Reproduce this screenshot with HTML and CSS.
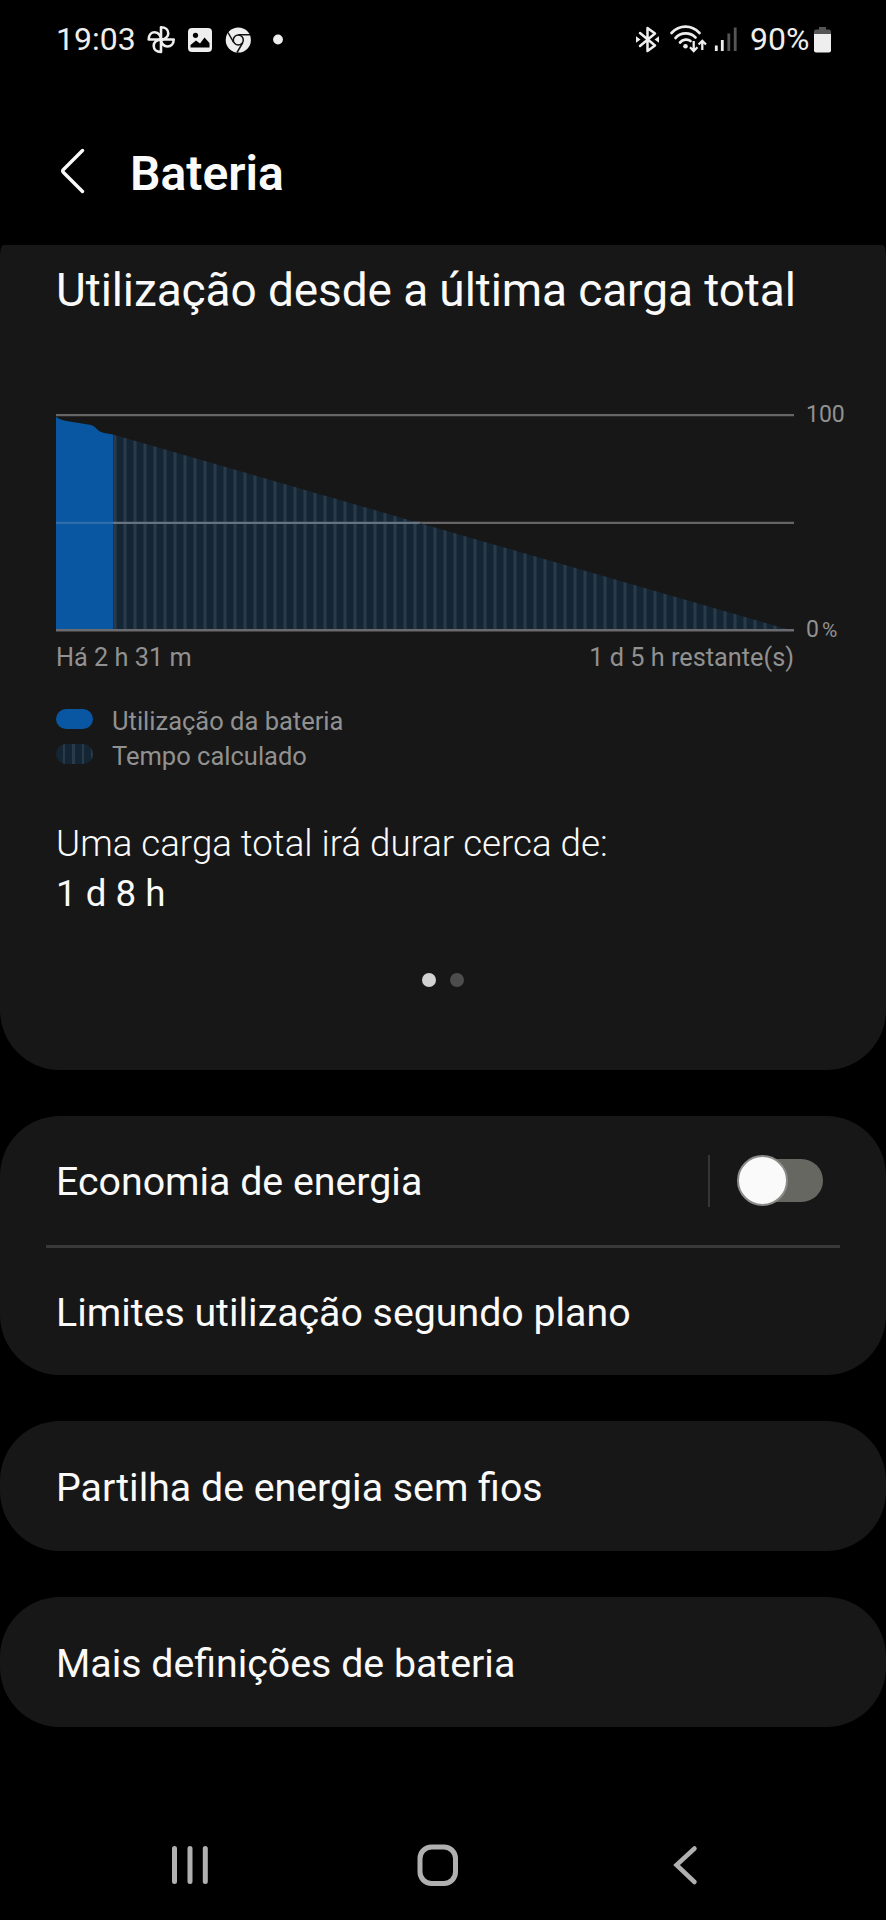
FILE: index.html
```html
<!DOCTYPE html>
<html lang="pt">
    <head>
        <meta charset="utf-8">
        <title>Bateria</title>
        <link rel="stylesheet" href="styles.css">
    </head>
    <body>
        <div class="status">
            <span class="time">19:03</span>
            <svg class="icons-left" width="140" height="32" viewBox="145 24 140 32">
                <g fill="none" stroke="#eee" stroke-width="2.6" stroke-linejoin="round">
                    <path d="M161 39.5V27.3C165.5 27.3 168.3 30 168.3 33.5C168.3 36.7 165 39.5 161 39.5Z"/>
                    <path d="M161 39.5H173.7C173.7 44 171 46.5 167.5 46.5C164 46.5 161 43.5 161 39.5Z"/>
                    <path d="M161 39.5V52C156.5 52 153.7 49.3 153.7 45.8C153.7 42.3 157 39.5 161 39.5Z"/>
                    <path d="M161 39.5H148.7C148.7 35 151.3 32.3 154.8 32.3C158.3 32.3 161 35.5 161 39.5Z"/>
                </g>
                <rect x="188" y="28" width="24" height="24" rx="4" fill="#eee"/>
                <circle cx="195.5" cy="35.3" r="2.6"/>
                <path d="M190.5 47.5V45L196 40.5L200 43.5L204.5 37.5L209.5 43V47.5Z"/>
                <circle cx="238.3" cy="40" r="12.6" fill="#eee"/>
                <g fill="none" stroke="#111" stroke-width="1.5">
                    <circle cx="238.3" cy="40" r="5"/>
                    <path d="M238.3 34.8H250M233.8 42.6L228 32.5M242.8 42.6L237 52.5"/>
                </g>
                <circle cx="278" cy="39.5" r="4.9" fill="#eee"/>
            </svg>
            <svg class="icons-right" width="106" height="32" viewBox="634 24 106 32">
                <path d="M640 33L655 45.5L647.5 51V28L655 33.5L640 46" fill="none" stroke="#eee" stroke-width="2.5" stroke-linejoin="round" stroke-linecap="round"/>
                <path d="M636 36.3L640.5 39.5L636 42.7ZM659 36.3L654.5 39.5L659 42.7Z" fill="#eee"/>
                <g fill="none" stroke="#eee" stroke-width="2.7" stroke-linecap="round">
                    <path d="M671.5 33C679.5 24.5 691.5 24.5 699.5 33"/>
                    <path d="M675.5 38C681 32 690 32 695.5 37.5"/>
                    <path d="M680 42.5C683 39 688 39 690.5 41"/>
                </g>
                <circle cx="685.5" cy="46.3" r="2.3" fill="#eee"/>
                <path d="M693.7 41V50.5M690 47.3L693.7 51L697.4 47.3M702.3 50V41M698.6 44.5L702.3 40.8L706 44.5" fill="none" stroke="#eee" stroke-width="2.3"/>
                <path d="M716.3 45.5V51M722.3 40V51" stroke="#eee" stroke-width="2.8"/>
                <path d="M728.8 33.5V51M735.2 27.5V51" stroke="#555" stroke-width="2.8"/>
            </svg>
            <span class="percent">90%</span>
            <svg class="battery" width="18" height="28" viewBox="0 0 18 28">
                <path d="M5 1H12V3.5H15A2 2 0 0 1 17 5.5V9H0V5.5A2 2 0 0 1 2 3.5H5Z" fill="#555"/>
                <path d="M0 8H17V24.5A2 2 0 0 1 15 26.5H2A2 2 0 0 1 0 24.5Z" fill="#eee"/>
            </svg>
        </div>

        <div class="header">
            <svg width="26" height="46" viewBox="0 0 26 46">
                <path d="M22.5 2.5L3.5 21.5Q2 23 3.5 24.5L22.5 43.5" fill="none" stroke="#fafafa" stroke-width="3.4" stroke-linecap="round"/>
            </svg>
            <h1>Bateria</h1>
        </div>

        <div class="card usage">
            <h2>Utilização desde a última carga total</h2>
            <div class="chart">
                <svg class="plot" width="738" height="218" viewBox="56 414.5 738 218">
                    <defs>
                        <pattern id="stripes" x="123.5" width="10" height="10" patternUnits="userSpaceOnUse">
                            <rect width="10" height="10" fill="#142534"/>
                            <rect width="3" height="10" fill="#2a3a4a"/>
                        </pattern>
                    </defs>
                    <path d="M56 415.7H794M56 523.3H794" stroke="#666668" stroke-width="2.3"/>
                    <path d="M113 435L790 630.5H113Z" fill="url(#stripes)"/>
                    <path d="M56 417.5C62 422 74 422.5 91 425.5C96 427 97 431 101 432.5C105 434 109 434 113 435V630.5H56Z" fill="#0957a2"/>
                    <path d="M56 523.3H113" stroke="#2f6caa" stroke-width="2.3"/>
                    <path d="M113 523.3H420" stroke="#667482" stroke-width="2.3"/>
                    <path d="M56 630.7H794" stroke="#6b6b6f" stroke-width="2.5"/>
                </svg>
                <div class="scale">
                    <span>100</span>
                    <span>0<span class="pct">%</span></span>
                </div>
            </div>
            <div class="axis">
                <span>Há 2 h 31 m</span>
                <span>1 d 5 h restante(s)</span>
            </div>
            <div class="legend">
                <div><i class="swatch blue"></i><span>Utilização da bateria</span></div>
                <div><i class="swatch striped"></i><span>Tempo calculado</span></div>
            </div>
            <div class="estimate">
                <p class="light">Uma carga total irá durar cerca de:</p>
                <p>1 d 8 h</p>
            </div>
            <div class="dots"><i class="dot active"></i><i class="dot"></i></div>
        </div>

        <div class="card double">
            <div class="row">
                <span>Economia de energia</span>
                <div class="switch-box"><div class="switch"><div class="knob"></div></div></div>
            </div>
            <div class="divider"></div>
            <div class="row"><span>Limites utilização segundo plano</span></div>
        </div>

        <div class="card single"><div class="row"><span>Partilha de energia sem fios</span></div></div>
        <div class="card single"><div class="row"><span>Mais definições de bateria</span></div></div>

        <div class="nav">
            <svg width="38" height="44" viewBox="0 0 38 44">
                <path d="M3.5 5.5V38.500M19 5.500V38.500M34.3 5.500V38.500" stroke="#b0b0b0" stroke-width="5" stroke-linecap="round"/>
            </svg>
            <svg class="home" width="42" height="44" viewBox="0 0 42 44">
                <rect x="3" y="4" width="35.5" height="36.500" rx="11.5" fill="none" stroke="#b0b0b0" stroke-width="5"/>
            </svg>
            <svg width="26" height="44" viewBox="0 0 26 44">
                <path d="M22.5 5.5L4.5 22L22.5 39" fill="none" stroke="#b0b0b0" stroke-width="4.5" stroke-linecap="round"/>
            </svg>
        </div>
    </body>
</html>
```
FILE: styles.css
```css
* {box-sizing: border-box;}

body {
        margin: 0;
        width: 886px;
        height: 1920px;
        background: #000;
        color: #fafafa;
        font-family: Roboto, sans-serif;
        overflow: hidden;}

h1, h2, p {margin: 0; font-weight: 400;}

svg {display: block; flex: none;}

span, h1, h2, p {white-space: nowrap;}

/* status bar */
.status {
        height: 78px;
        padding-left: 56px;
        display: flex;
        align-items: center;
        font-size: 32px;
        color: #eee;}

.time {width: 89px;}

.icons-left {margin-top: 2px;}

.icons-right {margin-left: 349px; margin-top: 2px;}

.percent {margin-left: 10px; width: 64px;}

.battery {margin-top: 1px;}

/* title */
.header {
        height: 167px;
        padding: 20px 0 0 60px;
        display: flex;}

.header svg {margin-top: 50px;}

.header h1 {
        margin-left: 44px;
        margin-top: 46px;
        font-size: 48px;
        line-height: 60px;
        font-weight: 600;}

/* cards */
.card {
        background: #171717;
        border-radius: 60px;
        margin-bottom: 46px;}

.usage {
        height: 825px;
        padding: 18px 0 0 56px;
        border-radius: 3px 3px 60px 60px / 12px 12px 60px 60px;}

.usage h2 {
        font-size: 46px;
        line-height: 54px;
        letter-spacing: -0.1px;}

.chart {
        margin-top: 86px;
        height: 239px;
        display: flex;}

.plot {margin-top: 11px;}

.scale {
        margin-left: 12px;
        display: flex;
        flex-direction: column;
        justify-content: space-between;
        font-size: 23px;
        line-height: 24px;
        color: #919191;}

.pct {font-size: 21px; margin-left: 3px;}

.axis {
        width: 738px;
        margin-top: 1px;
        display: flex;
        justify-content: space-between;
        font-size: 25.3px;
        line-height: 30px;
        color: #919191;}

.legend {margin-top: 31px; color: #919191; font-size: 25.5px;}

.legend div {
        display: flex;
        height: 34.5px;
        line-height: 34.5px;}

.swatch {
        width: 37px;
        height: 20px;
        margin: 5px 19px 0 0;
        border-radius: 10px;}

.blue {background: #0957a2;}

.striped {background: repeating-linear-gradient(90deg, #142534 0 7px, #2a3a4a 7px 9.3px);}

.estimate {
        margin-top: 46px;
        font-size: 36.7px;
        line-height: 50px;}

.light {font-weight: 300;}

.dots {
        margin: 54px 0 0 366px;
        display: flex;
        gap: 14px;}

.dot {
        width: 14px;
        height: 14px;
        border-radius: 50%;
        background: #4d4d4d;}

.active {background: #d2d2d2;}

.double {height: 259px;}

.single {height: 130px;}

.row {
        height: 129px;
        padding: 0 63px 0 56px;
        display: flex;
        align-items: center;
        justify-content: space-between;
        font-size: 39.3px;}

.row span {padding-top: 2px;}

.single .row {height: 131px;}

.divider {
        margin: 0 46px;
        height: 2.5px;
        background: #3a3a3a;}

.switch-box {
        height: 52px;
        padding-left: 34px;
        border-left: 2px solid #363636;
        display: flex;
        align-items: center;}

.switch {
        width: 79px;
        height: 43px;
        border-radius: 22px;
        background: #656760;
        display: flex;
        align-items: center;}

.knob {
        flex: none;
        width: 51px;
        height: 51px;
        margin-left: -7px;
        border: 2px solid #8b8c89;
        border-radius: 50%;
        background: #fafafa;}

/* bottom buttons */
.nav {
        margin-top: 116px;
        padding-left: 171px;
        display: flex;}

.home {margin: 0 213px 0 208px;}
```
